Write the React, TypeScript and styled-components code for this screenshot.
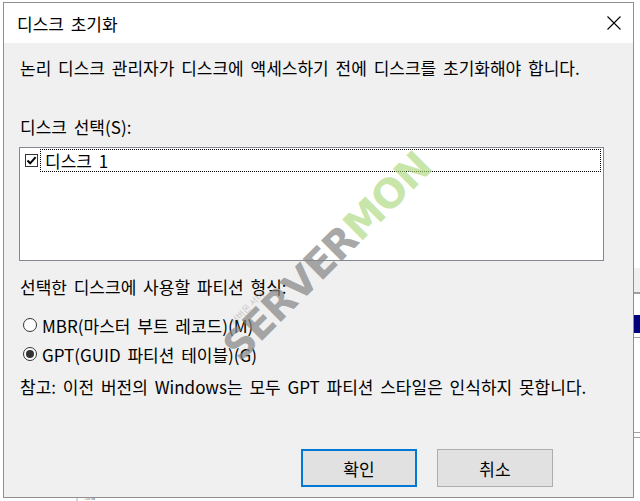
import React from "react";
import styled, { createGlobalStyle } from "styled-components";

const Global = createGlobalStyle`
  html, body { margin: 0; padding: 0; background: #fff; }
  body { font-family: "Noto Sans CJK KR", "Noto Sans", sans-serif; }
  * { box-sizing: border-box; }
`;

const Stage = styled.div`
  position: relative;
  width: 640px;
  height: 501px;
  overflow: hidden;
  background: #fff;
`;

/* window behind the dialog */
const Backdrop = styled.div`
  display: grid;
  grid-template-columns: 634px 1fr;
  grid-template-rows: 497px 1fr;
  width: 100%;
  height: 100%;
`;

const BackMain = styled.div`
  background: #fff;
`;

const RightStrip = styled.div`
  display: flex;
  flex-direction: column;
`;

const Stripe = styled.div<{ $h: number; $c: string }>`
  height: ${(p) => p.$h}px;
  flex: none;
  background: ${(p) => p.$c};
`;

const BottomStrip = styled.div`
  grid-column: 1 / span 2;
  display: flex;
  background: #fff;
`;

const BottomGap = styled.div`
  width: 78px;
  flex: none;
  border-right: 2px solid #d4d4d4;
`;

const BottomText = styled.div`
  margin-left: 6px;
  font-size: 3px;
  line-height: 4px;
  color: #555;
  font-family: "Noto Sans", sans-serif;
`;

/* dialog */
const Dialog = styled.div`
  position: absolute;
  left: 3px;
  top: 2px;
  width: 631px;
  height: 496px;
  border: 1px solid #8f8f8f;
  display: flex;
  flex-direction: column;
  background: #f0f0f0;
  color: #000;
  font-size: 17px;
  word-spacing: 3px;
`;

const TitleBar = styled.div`
  height: 40px;
  flex: none;
  background: #fff;
  display: flex;
  align-items: center;
  justify-content: space-between;
  padding: 0 12px 0 13px;
`;

const Title = styled.div`
  line-height: 20px;
  margin-top: 1px;
`;

const CloseBtn = styled.div`
  width: 15px;
  height: 15px;
  display: flex;
  align-items: center;
  justify-content: center;
`;

const Body = styled.div`
  flex: 1;
  display: flex;
  flex-direction: column;
  padding: 0 0 0 16px;
`;

const Line = styled.div<{ $mt: number }>`
  margin-top: ${(p) => p.$mt}px;
  line-height: 20px;
  height: 20px;
  white-space: nowrap;
`;

const ListBox = styled.div`
  margin: 10px 0 0 -1px;
  width: 585px;
  height: 114px;
  border: 1px solid #828790;
  background: #fff;
  padding: 1px 2px 0 5px;
`;

const ItemRow = styled.div`
  display: flex;
  align-items: center;
  gap: 2px;
`;

const CheckBox = styled.div`
  width: 13px;
  height: 13px;
  flex: none;
  border: 1px solid #333;
  background: #fff;
  display: flex;
  align-items: center;
  justify-content: center;
  margin-top: -1px;
`;

const FocusItem = styled.div`
  flex: 1;
  height: 23px;
  border: 1px dotted #000;
  padding-left: 4px;
  line-height: 21px;
`;

const RadioRow = styled.div<{ $mt: number }>`
  margin-top: ${(p) => p.$mt}px;
  display: flex;
  align-items: center;
  gap: 5px;
  height: 20px;
  padding-left: 3px;
  white-space: nowrap;
`;

const Radio = styled.div<{ $on?: boolean }>`
  width: 14px;
  height: 14px;
  flex: none;
  border-radius: 50%;
  border: 1px solid #333;
  background: #fff;
  display: flex;
  align-items: center;
  justify-content: center;
  &::after {
    content: "";
    display: ${(p) => (p.$on ? "block" : "none")};
    width: 8px;
    height: 8px;
    border-radius: 50%;
    background: #333;
  }
`;

const ButtonRow = styled.div`
  margin-top: 52px;
  display: flex;
  gap: 20px;
  padding-left: 281px;
`;

const Button = styled.div<{ $def?: boolean }>`
  width: 116px;
  height: 38px;
  background: #e1e1e1;
  border: ${(p) => (p.$def ? "2px solid #0078d7" : "1px solid #adadad")};
  display: flex;
  align-items: center;
  justify-content: center;
`;

/* watermark overlay */
const Watermark = styled.div`
  position: absolute;
  left: 327px;
  top: 256px;
  transform: translate(-50%, -50%) rotate(-45deg);
  font-family: "DejaVu Sans", "Liberation Sans", sans-serif;
  font-weight: 700;
  font-size: 40px;
  letter-spacing: -1px;
  white-space: nowrap;
  pointer-events: none;
  line-height: 1;
`;

const WmGrey = styled.span`
  color: rgba(135, 135, 135, 0.72);
`;

const WmGreen = styled.span`
  color: rgba(170, 215, 120, 0.65);
`;

const WmSmall = styled.div`
  position: absolute;
  left: 247px;
  top: 308px;
  transform: translate(-50%, -50%) rotate(-45deg);
  font-size: 9px;
  color: rgba(140, 140, 140, 0.45);
  white-space: nowrap;
  pointer-events: none;
`;

export default function App() {
  return (
    <>
      <Global />
      <Stage>
        <Backdrop>
          <BackMain />
          <RightStrip>
            <Stripe $h={268} $c="#ffffff" />
            <Stripe $h={24} $c="#f0f0f0" />
            <Stripe $h={2} $c="#a0a0a0" />
            <Stripe $h={21} $c="#ffffff" />
            <Stripe $h={18} $c="#00007f" />
            <Stripe $h={4} $c="#ffffff" />
            <Stripe $h={1} $c="#a0a0a0" />
            <Stripe $h={94} $c="#ffffff" />
            <Stripe $h={1} $c="#a0a0a0" />
            <Stripe $h={4} $c="#ffffff" />
            <Stripe $h={1} $c="#a0a0a0" />
            <Stripe $h={59} $c="#ffffff" />
          </RightStrip>
          <BottomStrip>
            <BottomGap />
            <BottomText>1.00 GB</BottomText>
          </BottomStrip>
        </Backdrop>

        <Dialog>
          <TitleBar>
            <Title>디스크 초기화</Title>
            <CloseBtn>
              <svg width="14" height="14" viewBox="0 0 14 14">
                <path d="M0.5 0.5 L13.5 13.5 M13.5 0.5 L0.5 13.5" stroke="#000" strokeWidth="1.1" fill="none" />
              </svg>
            </CloseBtn>
          </TitleBar>
          <Body>
            <Line $mt={15}>논리 디스크 관리자가 디스크에 액세스하기 전에 디스크를 초기화해야 합니다.</Line>
            <Line $mt={39}>디스크 선택(S):</Line>
            <ListBox>
              <ItemRow>
                <CheckBox>
                  <svg width="11" height="11" viewBox="0 0 11 11">
                    <path d="M1.5 5.5 L4.2 8.3 L9.6 2.2" stroke="#000" strokeWidth="2" fill="none" />
                  </svg>
                </CheckBox>
                <FocusItem>디스크 1</FocusItem>
              </ItemRow>
            </ListBox>
            <Line $mt={16}>선택한 디스크에 사용할 파티션 형식:</Line>
            <RadioRow $mt={18}>
              <Radio />
              <span>MBR(마스터 부트 레코드)(M)</span>
            </RadioRow>
            <RadioRow $mt={9}>
              <Radio $on />
              <span>GPT(GUID 파티션 테이블)(G)</span>
            </RadioRow>
            <Line $mt={13}>참고: 이전 버전의 Windows는 모두 GPT 파티션 스타일은 인식하지 못합니다.</Line>
            <ButtonRow>
              <Button $def>확인</Button>
              <Button>취소</Button>
            </ButtonRow>
          </Body>
        </Dialog>

        <Watermark>
          <WmGrey>SERVER</WmGrey>
          <WmGreen>MON</WmGreen>
        </Watermark>
        <WmSmall>서버몬 서버</WmSmall>
      </Stage>
    </>
  );
}
